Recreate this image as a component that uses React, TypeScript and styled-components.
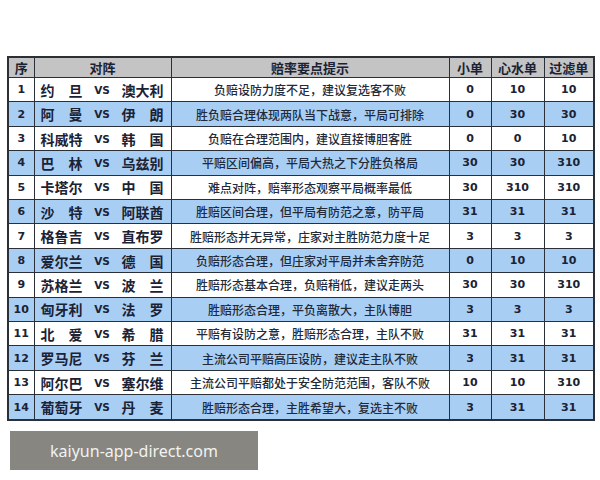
import React from 'react';
import styled, { createGlobalStyle } from 'styled-components';

const GlobalStyle = createGlobalStyle`
    html, body {
        margin: 0;
        padding: 0;
        background: #ffffff;
    }
`;

type Row = {
    no: number;
    home: string;
    away: string;
    tip: string;
    small: string;
    heart: string;
    filter: string;
};

const rows: Row[] = [
    { no: 1, home: '约旦', away: '澳大利', tip: '负赔设防力度不足，建议复选客不败', small: '0', heart: '10', filter: '10' },
    { no: 2, home: '阿曼', away: '伊朗', tip: '胜负赔合理体现两队当下战意，平局可排除', small: '0', heart: '30', filter: '30' },
    { no: 3, home: '科威特', away: '韩国', tip: '负赔在合理范围内，建议直接博胆客胜', small: '0', heart: '0', filter: '10' },
    { no: 4, home: '巴林', away: '乌兹别', tip: '平赔区间偏高，平局大热之下分胜负格局', small: '30', heart: '30', filter: '310' },
    { no: 5, home: '卡塔尔', away: '中国', tip: '难点对阵，赔率形态观察平局概率最低', small: '30', heart: '310', filter: '310' },
    { no: 6, home: '沙特', away: '阿联酋', tip: '胜赔区间合理，但平局有防范之意，防平局', small: '31', heart: '31', filter: '31' },
    { no: 7, home: '格鲁吉', away: '直布罗', tip: '胜赔形态并无异常，庄家对主胜防范力度十足', small: '3', heart: '3', filter: '3' },
    { no: 8, home: '爱尔兰', away: '德国', tip: '负赔形态合理，但庄家对平局并未舍弃防范', small: '0', heart: '10', filter: '10' },
    { no: 9, home: '苏格兰', away: '波兰', tip: '胜赔形态基本合理，负赔稍低，建议走两头', small: '30', heart: '30', filter: '310' },
    { no: 10, home: '匈牙利', away: '法罗', tip: '胜赔形态合理，平负离散大，主队博胆', small: '3', heart: '3', filter: '3' },
    { no: 11, home: '北爱', away: '希腊', tip: '平赔有设防之意，胜赔形态合理，主队不败', small: '31', heart: '31', filter: '31' },
    { no: 12, home: '罗马尼', away: '芬兰', tip: '主流公司平赔高压设防，建议走主队不败', small: '3', heart: '31', filter: '31' },
    { no: 13, home: '阿尔巴', away: '塞尔维', tip: '主流公司平赔都处于安全防范范围，客队不败', small: '10', heart: '10', filter: '310' },
    { no: 14, home: '葡萄牙', away: '丹麦', tip: '胜赔形态合理，主胜希望大，复选主不败', small: '3', heart: '31', filter: '31' },
];

const Page = styled.div`
    padding: 56px 5px 0 7px;
    display: flex;
    flex-direction: column;
    align-items: flex-start;
    gap: 10px;
`;

const Table = styled.table`
    width: 588px;
    height: 365px;
    border-collapse: collapse;
    table-layout: fixed;
    border: 2px solid #2b3038;
    color: #1b2234;
`;

const Col = styled.col<{ $w?: number }>`
    width: ${p => (p.$w ? `${p.$w}px` : 'auto')};
`;

const HeadRow = styled.tr`
    background: #c4c4c4;
`;

const BodyRow = styled.tr<{ $alt: boolean }>`
    background: ${p => (p.$alt ? '#a9cef4' : '#ffffff')};
`;

const Th = styled.th`
    border: 1px solid #2b3038;
    padding: 0;
    font-family: "Noto Sans CJK SC", sans-serif;
    font-weight: 700;
    font-size: 13px;
    text-align: center;
    color: #1b2234;
`;

const Cell = styled.td`
    border: 1px solid #2b3038;
    padding: 0;
    text-align: center;
    vertical-align: middle;
`;

const NumCell = styled(Cell)`
    font-family: "DejaVu Sans", sans-serif;
    font-weight: 700;
    font-size: 11px;
`;

const TipCell = styled(Cell)`
    font-family: "Noto Sans CJK SC", sans-serif;
    font-weight: 500;
    font-size: 12px;
    color: #222a3a;
    white-space: nowrap;
`;

const Match = styled.div`
    display: grid;
    grid-template-columns: 42px 1fr 42px;
    align-items: center;
    padding: 0 7px 0 6px;
`;

const Team = styled.div`
    display: flex;
    justify-content: space-between;
    font-family: "Noto Sans CJK SC", sans-serif;
    font-weight: 700;
    font-size: 14px;
    line-height: 18px;
`;

const Vs = styled.span`
    text-align: center;
    font-family: "DejaVu Sans", sans-serif;
    font-weight: 700;
    font-size: 10.5px;
`;

const Watermark = styled.div`
    margin-left: 3px;
    width: 248px;
    height: 39px;
    background: #878680;
    display: flex;
    align-items: center;
    justify-content: center;
    font-family: "Noto Sans", sans-serif;
    font-size: 16px;
    color: #f2f2f0;
`;

const TeamName = ({ name }: { name: string }) => (
    <Team>
        {name.split('').map((ch, i) => (
            <span key={i}>{ch}</span>
        ))}
    </Team>
);

export default function App() {
    return (
        <>
            <GlobalStyle />
            <Page>
                <Table>
                    <colgroup>
                        <Col $w={26} />
                        <Col $w={137} />
                        <Col $w={278} />
                        <Col $w={42} />
                        <Col $w={53} />
                        <Col />
                    </colgroup>
                    <thead>
                        <HeadRow>
                            <Th>序</Th>
                            <Th>对阵</Th>
                            <Th>赔率要点提示</Th>
                            <Th>小单</Th>
                            <Th>心水单</Th>
                            <Th>过滤单</Th>
                        </HeadRow>
                    </thead>
                    <tbody>
                        {rows.map(r => (
                            <BodyRow key={r.no} $alt={r.no % 2 === 0}>
                                <NumCell>{r.no}</NumCell>
                                <Cell>
                                    <Match>
                                        <TeamName name={r.home} />
                                        <Vs>VS</Vs>
                                        <TeamName name={r.away} />
                                    </Match>
                                </Cell>
                                <TipCell>{r.tip}</TipCell>
                                <NumCell>{r.small}</NumCell>
                                <NumCell>{r.heart}</NumCell>
                                <NumCell>{r.filter}</NumCell>
                            </BodyRow>
                        ))}
                    </tbody>
                </Table>
                <Watermark>kaiyun-app-direct.com</Watermark>
            </Page>
        </>
    );
}
